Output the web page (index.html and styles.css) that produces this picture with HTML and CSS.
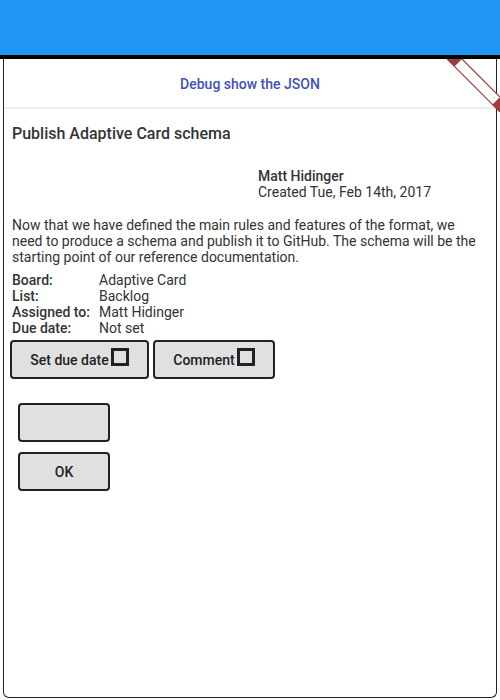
FILE: index.html
```html
<!DOCTYPE html>
<html>
<head>
<meta charset="utf-8">
<link rel="stylesheet" href="styles.css">
</head>
<body>
<div class="topbar"></div>
<div class="card">
  <div class="header">Debug show the JSON</div>
  <div class="content">
    <div class="title">Publish Adaptive Card schema</div>
    <div class="meta">
      <div class="meta-spacer"></div>
      <div class="meta-text">
        <div class="author">Matt Hidinger</div>
        <div class="created">Created Tue, Feb 14th, 2017</div>
      </div>
    </div>
    <p class="desc">Now that we have defined the main rules and features of the format, we need to produce a schema and publish it to GitHub. The schema will be the starting point of our reference documentation.</p>
    <div class="facts">
      <div class="label">Board:</div><div class="value">Adaptive Card</div>
      <div class="label">List:</div><div class="value">Backlog</div>
      <div class="label">Assigned to:</div><div class="value">Matt Hidinger</div>
      <div class="label">Due date:</div><div class="value">Not set</div>
    </div>
    <div class="actions">
      <button class="btn btn-due">Set due date<span class="box"></span></button>
      <button class="btn btn-comment">Comment<span class="box"></span></button>
    </div>
    <div class="extra">
      <button class="btn btn-small"></button>
      <button class="btn btn-small">OK</button>
    </div>
  </div>
</div>
<svg class="ribbon" width="53" height="53" viewBox="0 0 53 53">
  <polygon points="0,0 15,0 53,38 53,53" fill="#fff"/>
  <line x1="0" y1="0" x2="53" y2="53" stroke="#a23b3b" stroke-width="1.2"/>
  <line x1="15" y1="0" x2="53" y2="38" stroke="#a23b3b" stroke-width="1.2"/>
  <line x1="7.5" y1="0" x2="53" y2="45.5" stroke="#e6dede" stroke-width="1" stroke-dasharray="3 3"/>
  <polygon points="0,0 15,0 7.5,7.5" fill="#a23b3b"/>
  <polygon points="53,38 53,53 45.5,45.5" fill="#a23b3b"/>
</svg>
</body>
</html>
```

FILE: styles.css
```css
* { box-sizing: border-box; }
html, body { margin: 0; padding: 0; background: #fff; }
body {
  font-family: Roboto, "Liberation Sans", sans-serif;
  color: #333;
  width: 500px;
  height: 700px;
  overflow: hidden;
  position: relative;
}
.topbar {
  height: 59px;
  background: #2196f3;
  border-bottom: 4px solid #000;
}
.card {
  margin: 0 3px;
  height: 639px;
  border: 1px solid #222;
  border-top: none;
  border-radius: 0 0 6px 6px;
}
.ribbon {
  position: absolute;
  left: 447px;
  top: 59px;
  display: block;
}
.header {
  height: 50px;
  border-bottom: 2px solid #eee;
  display: flex;
  align-items: center;
  justify-content: center;
  color: #3f51b5;
  font-size: 14px;
  font-weight: 500;
  padding-top: 2px;
}
.content {
  padding: 15px 8px 0 8px;
}
.title {
  font-size: 16px;
  font-weight: 500;
  line-height: 19px;
  color: #333;
}
.meta {
  display: flex;
  margin-top: 25px;
  font-size: 14px;
  line-height: 16px;
}
.meta-spacer { width: 246px; }
.author { font-weight: 500; }
.desc {
  margin: 17px 0 0 0;
  font-size: 14px;
  line-height: 16px;
}
.facts {
  display: grid;
  grid-template-columns: 87px auto;
  font-size: 14px;
  line-height: 16px;
  margin-top: 7px;
}
.label { font-weight: 500; }
.actions {
  display: flex;
  gap: 4px;
  margin-top: 4px;
  margin-left: -2px;
}
.btn {
  font-family: Roboto, "Liberation Sans", sans-serif;
  font-size: 14px;
  font-weight: 500;
  color: #222;
  background: #e0e0e0;
  border: 2px solid #222;
  border-radius: 4px;
  padding: 0;
  display: flex;
  align-items: center;
  justify-content: center;
}
.btn-due { width: 139px; height: 39px; }
.btn-comment { width: 122px; height: 39px; }
.box {
  display: inline-block;
  width: 18px;
  height: 18px;
  border: 3px solid #222;
  margin-left: 2px;
  margin-top: -5px;
  background: #e0e0e0;
}
.extra {
  display: flex;
  flex-direction: column;
  gap: 10px;
  margin-top: 24px;
  margin-left: 6px;
}
.btn-small { width: 92px; height: 39px; }
```
